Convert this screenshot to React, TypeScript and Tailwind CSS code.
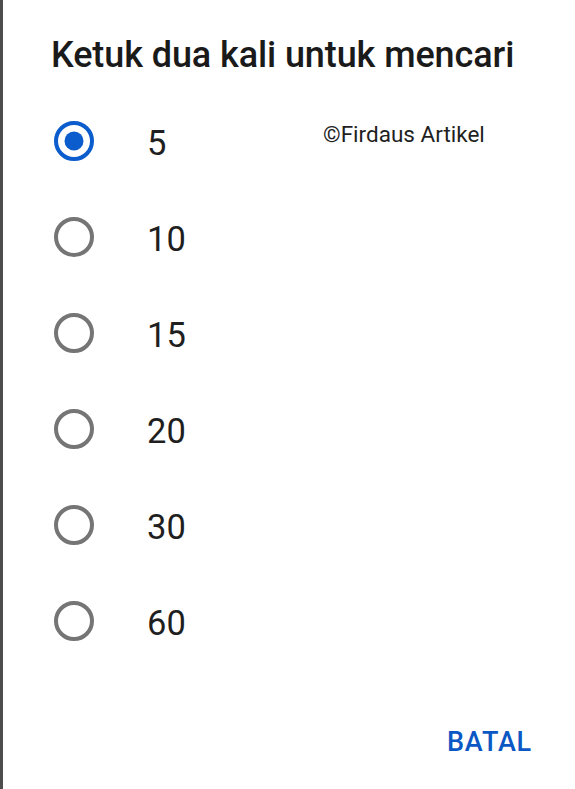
const options = [5, 10, 15, 20, 30, 60]

function Radio({ checked }: { checked: boolean }) {
  return (
    <svg width="44" height="44" viewBox="0 0 44 44" className="shrink-0">
      <circle cx="22" cy="22" r="18" fill="none" stroke={checked ? '#0b5ccc' : '#757575'} strokeWidth="4" />
      {checked && <circle cx="22" cy="22" r="9.5" fill="#0b5ccc" />}
    </svg>
  )
}

export default function App() {
  return (
    <div className="h-[789px] w-[575px] bg-white border-l-[3px] border-[#4d4d4d] font-['Roboto',sans-serif] text-[#1f1f1f] flex flex-col">
      <h1 className="pl-[48px] pt-[33px] text-[36px] font-medium leading-[44px] tracking-[-0.1px] text-[#1a1a1a]">Ketuk dua kali untuk mencari</h1>
      <div className="mt-[16px] flex flex-col">
        {options.map((n, i) => (
          <div key={n} className="relative h-[96px] flex items-center pl-[49px]">
            <Radio checked={i === 0} />
            <span className="ml-[51px] text-[34.5px] leading-none pt-[4px]">{n}</span>
            {i === 0 && (
              <span className="absolute left-[320px] top-[30px] text-[22.5px] leading-none">©Firdaus Artikel</span>
            )}
          </div>
        ))}
      </div>
      <div className="mt-auto mb-[27px] flex justify-end pr-[43px]">
        <span className="text-[27px] font-medium tracking-[0.8px] text-[#0b57c4]">BATAL</span>
      </div>
    </div>
  )
}
